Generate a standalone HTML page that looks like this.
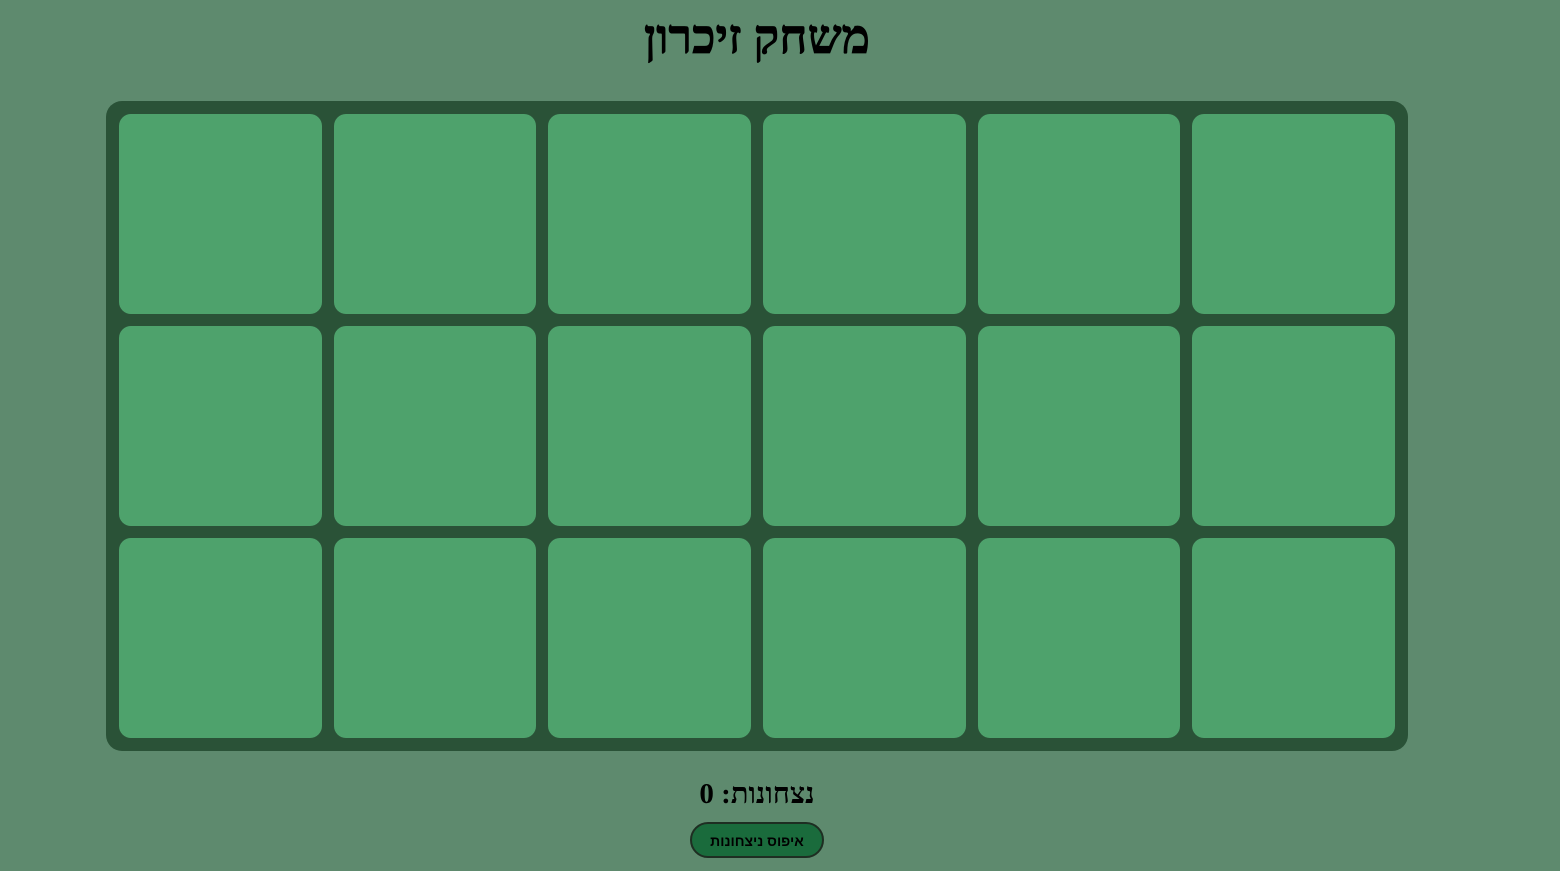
<!DOCTYPE html>
<html><head><meta charset="utf-8"><style>
html,body{margin:0;padding:0;}
body{width:1560px;height:871px;background:#5e8a6e;position:relative;overflow:hidden;font-family:"Liberation Serif","DejaVu Serif",serif;}
h1{position:absolute;top:10px;left:0;width:1514px;margin:0;text-align:center;font-size:48px;font-weight:bold;line-height:56px;-webkit-text-stroke:0.8px #000;}
.board{position:absolute;left:106px;top:101px;width:1276px;height:624px;padding:13px;background:#2a5237;border-radius:16px;display:grid;grid-template-columns:repeat(6,1fr);grid-template-rows:repeat(3,1fr);gap:12px;}
.c{background:#4ea26c;border-radius:12px;}
.score{position:absolute;top:775px;left:0;width:1514px;text-align:center;font-size:29px;font-weight:bold;line-height:38px;}
button{position:absolute;left:690px;top:822px;width:134px;height:36px;background:#1a6b3c;border:2px solid #1e2e22;border-radius:18px;font:bold 14px "Liberation Sans",sans-serif;color:#000;padding:2px 0 0;}
</style></head><body dir="rtl">
<h1>משחק זיכרון</h1>
<div class="board" dir="ltr">
<div class="c"></div><div class="c"></div><div class="c"></div><div class="c"></div><div class="c"></div><div class="c"></div>
<div class="c"></div><div class="c"></div><div class="c"></div><div class="c"></div><div class="c"></div><div class="c"></div>
<div class="c"></div><div class="c"></div><div class="c"></div><div class="c"></div><div class="c"></div><div class="c"></div>
</div>
<div class="score">נצחונות: 0</div>
<button>איפוס ניצחונות</button>
</body></html>
